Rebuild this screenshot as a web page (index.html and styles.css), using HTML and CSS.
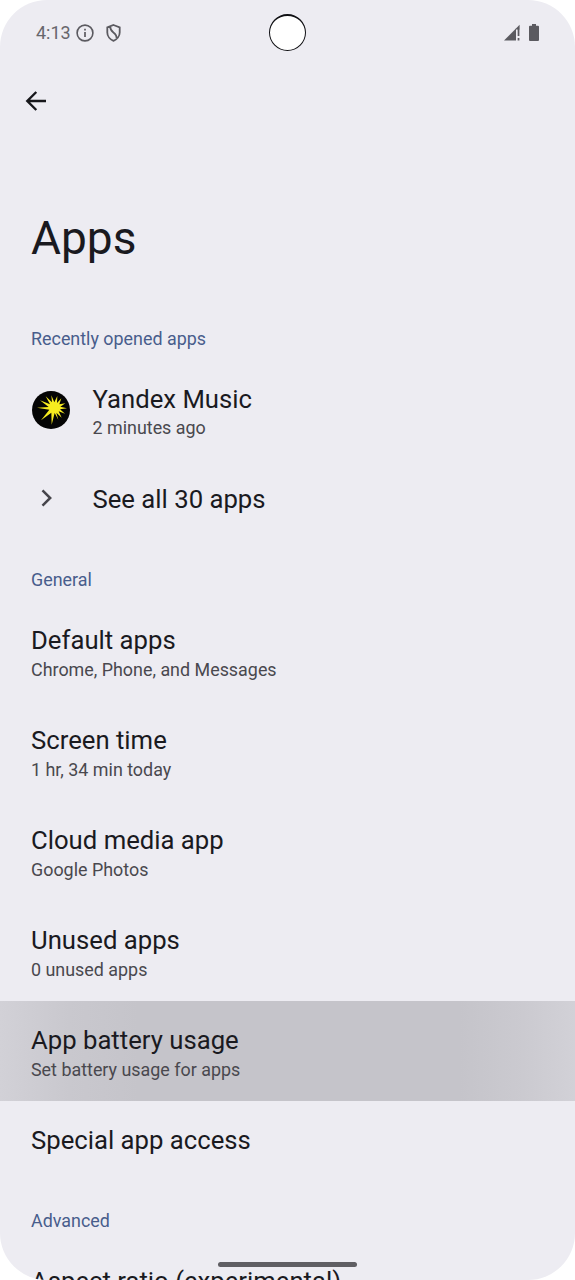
FILE: index.html
```html
<!DOCTYPE html>
<html lang="en">
<head>
<meta charset="utf-8">
<title>Apps</title>
<link rel="stylesheet" href="styles.css">
</head>
<body>
<div class="screen">
  <header class="status">
    <span class="clock">4:13</span>
    <svg class="info" width="18" height="18" viewBox="0 0 18 18"><circle cx="9" cy="9" r="7.9" fill="none" stroke="#5b5a60" stroke-width="1.6"/><path d="M9 8v5M9 4.8v1.8" stroke="#5b5a60" stroke-width="1.7"/></svg>
    <svg class="shield" width="16" height="18" viewBox="0 0 16 18"><path d="M7.500 1 13.700 3.300V8.400C13.700 12.200 11 15.600 7.500 16.800 4 15.600 1.300 12.200 1.300 8.400V3.300ZM4.300 2.700C3.700 9.500 11.300 7.500 10.600 14.700" fill="none" stroke="#5b5a60" stroke-width="1.800"/></svg>
    <span class="camera"></span>
    <svg class="signal" width="16" height="17" viewBox="0 0 16 17"><path d="M0 16.500 12 4.500V16.500Z" fill="#5b5a60"/><path d="M11 5.500 15.600.8V5.500Z" fill="#5b5a60"/><path d="M14.500 5v7M14.500 14v2.500" stroke="#5b5a60" stroke-width="1.800"/><path d="M12.600 6.500v10" stroke="#edecf2" stroke-width="1.100"/></svg>
    <svg class="battery" width="10" height="17" viewBox="0 0 10 17"><path d="M3 0H7V1.700H9Q10 1.700 10 2.700V16Q10 17 9 17H1Q0 17 0 16V2.700Q0 1.700 1 1.700H3Z" fill="#5b5a60"/></svg>
  </header>
  <nav class="toolbar">
    <svg width="22" height="20" viewBox="0 0 22 20"><path d="M21 10H2.500M11.300 1 2.300 10l9 9" fill="none" stroke="#17171b" stroke-width="2.400"/></svg>
  </nav>
  <h1 class="title">Apps</h1>
  <main>
    <h2 class="label">Recently opened apps</h2>
    <div class="row with-icon">
      <span class="lead"><svg class="music" width="40" height="40" viewBox="16 17 120 120"><circle cx="76" cy="77" r="57" fill="#050505"/><path fill="#f7ec1f" d="M34 70 69 68 43 48 73 60 60 36 79 54 77 33 86 54 95 35 94 56 107 42 101 60 119 57 104 67 124 72 103 75 118 88 99 81 108 100 92 85 98 106 87 86 78 121 77 85 46 108 71 76Z"/></svg></span>
      <div><div class="name">Yandex Music</div><div class="summary">2 minutes ago</div></div>
    </div>
    <div class="row with-icon single">
      <span class="lead"><svg class="chevron" width="12" height="18" viewBox="0 0 12 18"><path d="M1.500 1.300 9.200 9 1.500 16.700" fill="none" stroke="#46454b" stroke-width="2.500"/></svg></span>
      <div class="name">See all 30 apps</div>
    </div>
    <h2 class="label">General</h2>
    <div class="row general"><div class="name">Default apps</div><div class="summary">Chrome, Phone, and Messages</div></div>
    <div class="row general"><div class="name">Screen time</div><div class="summary">1 hr, 34 min today</div></div>
    <div class="row general"><div class="name">Cloud media app</div><div class="summary">Google Photos</div></div>
    <div class="row general"><div class="name">Unused apps</div><div class="summary">0 unused apps</div></div>
    <div class="row general pressed"><div class="name">App battery usage</div><div class="summary">Set battery usage for apps</div></div>
    <div class="row single"><div class="name">Special app access</div></div>
    <h2 class="label">Advanced</h2>
    <div class="row"><div class="name">Aspect ratio (experimental)</div></div>
  </main>
  <div class="home-bar"></div>
</div>
</body>
</html>
```
FILE: styles.css
```css
* { box-sizing: border-box; }
body { margin: 0; background: #fff; font-family: Roboto, sans-serif; }
.screen {
  position: relative;
  height: 1280px;
  overflow: hidden;
  background: #edecf2;
  border-radius: 47px;
  color: #1a1a1f;
}
.status {
  position: relative;
  display: flex;
  align-items: center;
  height: 65px;
  padding: 0 36px;
}
.clock { width: 40px; font-size: 18px; color: #67666c; }
.shield { margin-left: 12px; }
.camera {
  position: absolute;
  left: 269px;
  top: 14px;
  width: 37px;
  height: 37px;
  border: 1px solid #101014;
  border-top-width: 2px;
  border-radius: 50%;
  background: #fff;
}
.signal { margin-left: auto; }
.battery { margin-left: 9px; }
.toolbar { display: flex; align-items: center; height: 71px; padding-left: 25px; }
.title {
  height: 163px;
  margin: 0;
  padding: 75px 31px 0;
  font-size: 46px;
  font-weight: 400;
  line-height: 54px;
}
.label {
  height: 61px;
  margin: 0;
  padding: 29px 31px 0;
  font-size: 17.9px;
  font-weight: 400;
  line-height: 22px;
  color: #485d8c;
}
.row {
  display: flex;
  flex-direction: column;
  height: 100px;
  padding: 24px 31px 0;
}
.with-icon { flex-direction: row; }
.single { height: 80px; }
.lead { display: flex; width: 61.5px; flex: none; }
.music { margin-top: 6px; }
.chevron { margin: 5px 0 0 10px; }
.name { font-size: 25.7px; line-height: 31px; white-space: nowrap; }
.summary { font-size: 17.9px; line-height: 26px; color: #49484e; }
.general .summary { line-height: 27px; }
.pressed {
  background: linear-gradient(90deg, #d2d1d7 0, #c9c8ce 12%, #c5c4ca 24%, #c5c4ca 80%, #cbcad0 91%, #d2d1d7 100%);
}
.home-bar {
  position: absolute;
  left: 218px;
  bottom: 13px;
  width: 139px;
  height: 5px;
  border-radius: 3px;
  background: #5f5e63;
}
```
